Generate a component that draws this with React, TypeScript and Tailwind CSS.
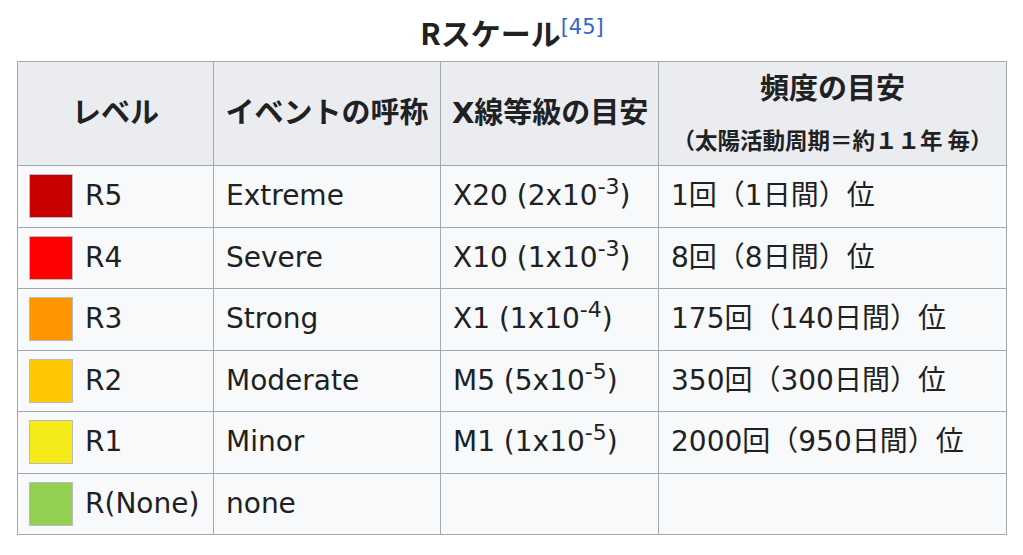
import React from 'react';

const rows = [
  { color: '#c80000', level: 'R5', name: 'Extreme', xray: 'X20 (2x10', exp: '-3', freq: '1回（1日間）位' },
  { color: '#ff0000', level: 'R4', name: 'Severe', xray: 'X10 (1x10', exp: '-3', freq: '8回（8日間）位' },
  { color: '#ff9600', level: 'R3', name: 'Strong', xray: 'X1 (1x10', exp: '-4', freq: '175回（140日間）位' },
  { color: '#ffc800', level: 'R2', name: 'Moderate', xray: 'M5 (5x10', exp: '-5', freq: '350回（300日間）位' },
  { color: '#f5eb19', level: 'R1', name: 'Minor', xray: 'M1 (1x10', exp: '-5', freq: '2000回（950日間）位' },
  { color: '#92d050', level: 'R(None)', name: 'none', xray: '', exp: '', freq: '' },
];

const App: React.FC = () => {
  return (
    <div className="bg-white w-[1023px] h-[555px] pl-[17px] pt-0 text-[#202122] font-['DejaVu_Sans','Noto_Sans_CJK_JP',sans-serif]">
      <table className="border-collapse table-fixed w-[989px] bg-[#f8f9fa] border border-[#a2a9b1]">
        <caption className="h-[61px] pt-[12px] text-[30px] leading-[40px] font-bold font-['Noto_Sans_CJK_JP',sans-serif] bg-white">
          Rスケール
          <sup className="text-[21px] font-normal text-[#3366cc] font-['DejaVu_Sans',sans-serif] relative -top-[11px]">[45]</sup>
        </caption>
        <colgroup>
          <col className="w-[196px]" />
          <col className="w-[227px]" />
          <col className="w-[218px]" />
          <col className="w-[348px]" />
        </colgroup>
        <thead>
          <tr className="h-[104px] bg-[#eaecf0] font-bold text-[29px]">
            <th className="border border-[#a2a9b1] px-[11px] text-center align-middle">レベル</th>
            <th className="border border-[#a2a9b1] px-[11px] text-center align-middle whitespace-nowrap">イベントの呼称</th>
            <th className="border border-[#a2a9b1] px-[11px] text-center align-middle whitespace-nowrap">X線等級の目安</th>
            <th className="border border-[#a2a9b1] px-[11px] text-center align-middle">
              <div className="leading-[50px]">頻度の目安</div>
              <div className="text-[22.5px] leading-[50px] whitespace-nowrap font-['Noto_Sans_CJK_JP',sans-serif]">（太陽活動周期＝約１１年 毎）</div>
            </th>
          </tr>
        </thead>
        <tbody className="text-[28px]">
          {rows.map((r) => (
            <tr key={r.level} className="h-[61.5px]">
              <td className="border border-[#a2a9b1] px-[11px] align-middle">
                <div className="flex items-center gap-[12px]">
                  <span className="w-[44px] h-[44px] shrink-0 border border-[#b8bcc2]" style={{ backgroundColor: r.color }} />
                  <span className="whitespace-nowrap">{r.level}</span>
                </div>
              </td>
              <td className="border border-[#a2a9b1] px-[12px] align-middle whitespace-nowrap">{r.name}</td>
              <td className="border border-[#a2a9b1] px-[12px] align-middle whitespace-nowrap">
                {r.xray && (
                  <>
                    {r.xray}
                    <sup className="text-[22px] relative -top-[11px]">{r.exp}</sup>)
                  </>
                )}
              </td>
              <td className="border border-[#a2a9b1] px-[12px] align-middle whitespace-nowrap">{r.freq}</td>
            </tr>
          ))}
        </tbody>
      </table>
    </div>
  );
};

export default App;
